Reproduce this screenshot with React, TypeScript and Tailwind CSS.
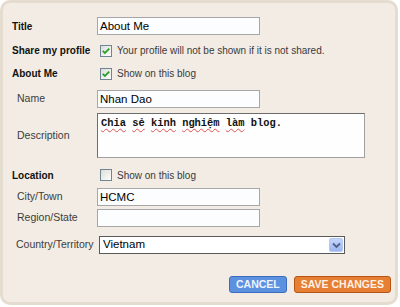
import React from "react";

const font = "font-['Tahoma','Liberation_Sans',sans-serif]";

function Check({ on }: { on?: boolean }) {
  return (
    <svg width="12" height="12" viewBox="0 0 12 12" className="shrink-0">
      <defs>
        <linearGradient id="cbg" x1="0" y1="0" x2="1" y2="1">
          <stop offset="0" stopColor="#dcdcd6" />
          <stop offset="1" stopColor="#ffffff" />
        </linearGradient>
      </defs>
      <rect x="0.5" y="0.5" width="11" height="11" fill="url(#cbg)" stroke="#6f8593" />
      {on && (
        <path d="M2.7 5.8 L4.9 8 L9.3 3.6" fill="none" stroke="#2ca02c" strokeWidth="1.8" />
      )}
    </svg>
  );
}

function Label({ children, bold }: { children: React.ReactNode; bold?: boolean }) {
  return bold ? (
    <div className="w-[85px] shrink-0 whitespace-nowrap text-[10px] font-bold text-[#111]">{children}</div>
  ) : (
    <div className="w-[85px] shrink-0 whitespace-nowrap pl-[5px] text-[10.5px] text-[#3c3c3c]">{children}</div>
  );
}

function TextBox({ value }: { value?: string }) {
  return (
    <div className="w-[163px] h-[18px] border border-[#a7a6aa] bg-[#fbfdff] px-[2px] text-[11.5px] leading-[16px] text-black font-['Liberation_Sans',sans-serif]">
      {value}
    </div>
  );
}

const wavy = "underline decoration-wavy decoration-[#e05050] decoration-1 underline-offset-2";

export default function App() {
  return (
    <div className="w-[400px] h-[307px] bg-white">
      <div
        className={`w-[398px] h-[305px] rounded-[10px] border-[3px] border-[#e4dccf] bg-[#f2ece4] pl-[9px] pt-[14px] ${font}`}
      >
        <div className="flex items-center">
          <Label bold>Title</Label>
          <TextBox value="About Me" />
        </div>

        <div className="mt-[9px] flex items-center h-[13px]">
          <Label bold>Share my profile</Label>
          <div className="flex items-center gap-[5px] pl-[3px] text-[10px] text-[#3a3a3a]">
            <Check on />
            <span>Your profile will not be shown if it is not shared.</span>
          </div>
        </div>

        <div className="mt-[10px] flex items-center h-[13px]">
          <Label bold>About Me</Label>
          <div className="flex items-center gap-[5px] pl-[3px] text-[10px] text-[#3a3a3a]">
            <Check on />
            <span>Show on this blog</span>
          </div>
        </div>

        <div className="mt-[10px] flex items-center">
          <Label>Name</Label>
          <TextBox value="Nhan Dao" />
        </div>

        <div className="mt-[5px] flex items-center">
          <Label>Description</Label>
          <div className="w-[268px] h-[45px] border border-t-[#6d6d6d] border-l-[#6d6d6d] border-r-[#a0a0a0] border-b-[#a0a0a0] bg-[#fefefe] px-[3px] pt-[2px] text-[10.4px] leading-[14px] text-[#111] font-['Liberation_Mono',monospace] font-bold">
            <span className={wavy}>Chia</span> <span className={wavy}>sẻ</span>{" "}
            <span className={wavy}>kinh</span> <span className={wavy}>nghiệm</span>{" "}
            <span className={wavy}>làm</span> blog.
          </div>
        </div>

        <div className="mt-[11px] flex items-center h-[12px]">
          <Label bold>Location</Label>
          <div className="flex items-center gap-[5px] pl-[3px] text-[10px] text-[#3a3a3a]">
            <Check />
            <span>Show on this blog</span>
          </div>
        </div>

        <div className="mt-[7px] flex items-center">
          <Label>City/Town</Label>
          <TextBox value="HCMC" />
        </div>

        <div className="mt-[3px] flex items-center">
          <Label>Region/State</Label>
          <TextBox />
        </div>

        <div className="mt-[9px] flex items-center">
          <div className="w-[87px] shrink-0 pl-[4px] text-[10.5px] text-[#3c3c3c] whitespace-nowrap">
            Country/Territory
          </div>
          <div className="w-[246px] h-[18px] flex items-center justify-between border border-[#5a5a5a] bg-white pl-[3px] pr-[1px] text-[11.5px] text-black font-['Liberation_Sans',sans-serif]">
            <span>Vietnam</span>
            <div className="w-[14px] h-[14px] rounded-[2px] border border-[#b4c8f0] bg-gradient-to-b from-[#c6d6fb] to-[#9db6f0] flex items-center justify-center">
              <svg width="9" height="7" viewBox="0 0 9 7">
                <path d="M1 1.5 L4.5 5 L8 1.5" fill="none" stroke="#4d6185" strokeWidth="1.8" />
              </svg>
            </div>
          </div>
        </div>

        <div className="mt-[22px] flex justify-end gap-[7px] pr-[4px]">
          <button className="h-[17px] px-[6px] rounded-[3px] border border-[#3b6cc0] bg-[#5c91e0] text-[10.5px] font-bold leading-[15px] text-[#eef4ff] font-['Liberation_Sans',sans-serif]">
            CANCEL
          </button>
          <button className="h-[17px] px-[6px] rounded-[3px] border border-[#b85515] bg-[#e67e34] text-[10.5px] font-bold leading-[15px] text-[#fff1e4] font-['Liberation_Sans',sans-serif]">
            SAVE CHANGES
          </button>
        </div>
      </div>
    </div>
  );
}
